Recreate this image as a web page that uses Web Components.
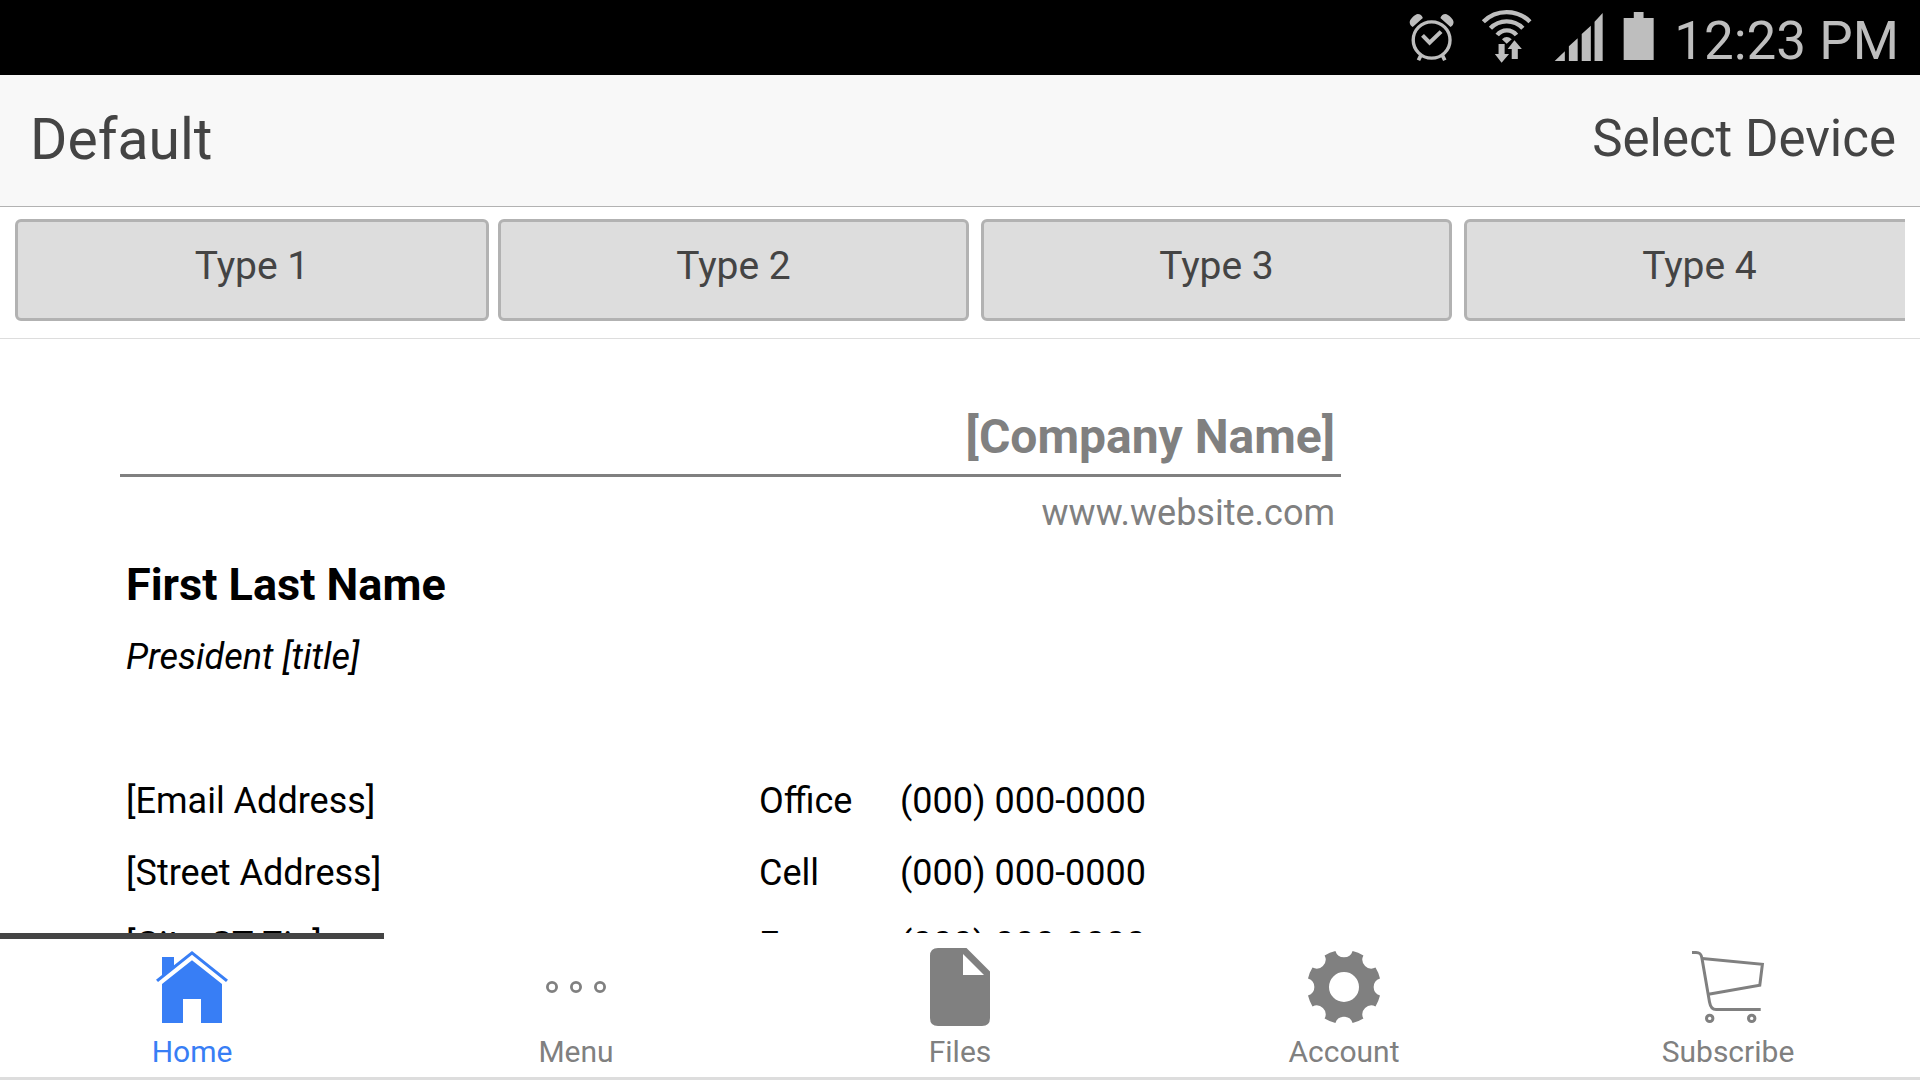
<!DOCTYPE html>
<html lang="en">
<head>
<meta charset="utf-8">
<meta name="viewport" content="width=device-width, initial-scale=1">
<title>Default</title>
<style>
  body {
    margin: 0;
    font-family: Roboto, "Open Sans", sans-serif;
  }
</style>
</head>
<body>
<signature-app></signature-app>

<script>
const makeTemplate = (html) => {
  const template = document.createElement('template');
  template.innerHTML = html;
  return template;
};

const statusTemplate = makeTemplate(`
  <style>
    :host {
      display: flex;
      justify-content: flex-end;
      align-items: center;
      gap: 20px;
      height: 75px;
      padding-right: 21px;
      background: #000;
      color: #bebebe;
      flex: none;
    }

    svg {
      display: block;
      height: 75px;
      fill: currentColor;
      overflow: visible;
    }

    .line {
      fill: none;
      stroke: currentColor;
    }

    time {
      padding-top: 6px;
      font-size: 53px;
      line-height: 68px;
      white-space: nowrap;
    }
  </style>

  <svg width="52" viewBox="57 0 154 225" preserveAspectRatio="none" aria-hidden="true">
    <circle class="line" cx="124" cy="120" r="54.5" stroke-width="10"/>
    <path class="line" d="M97 106 118 128 152 95" stroke-width="12"/>
    <path class="line" d="M93 164 85 181M155 164 163 181" stroke-width="11"/>
    <path d="M68 81 98 54Q94 42 83 42 77 42 66 53 59 60 59 66 59 76 68 81Z"/>
    <path d="M180 81 150 54Q154 42 165 42 171 42 182 53 189 60 189 66 189 76 180 81Z"/>
  </svg>
  <svg width="52" viewBox="270 0 154 225" preserveAspectRatio="none" aria-hidden="true">
    <path class="line" stroke-width="13" d="M277 65A97 97 0 0 1 415 65M298 85A66 66 0 0 1 394 85M318 105A36 36 0 0 1 375 105"/>
    <path d="M332 118Q346 104 361 118L346 131Z"/>
    <path d="M322 132H340V162H353L331 188 311 162H322ZM369 121 391 147H379V177H361V147H349Z"/>
  </svg>
  <svg width="50" viewBox="483 0 148 225" preserveAspectRatio="none" aria-hidden="true">
    <path d="M488 183 518 154V183ZM530 183V139L556 115V183ZM568 183V102L595 77V183ZM606 183V65L630 39V183Z"/>
  </svg>
  <svg width="31" viewBox="690 0 92 225" preserveAspectRatio="none" aria-hidden="true">
    <path d="M692 54H722V36H751V54H781V180H692Z"/>
  </svg>
  <time datetime="12:23">12:23 PM</time>
`);

class StatusBar extends HTMLElement {
  constructor() {
    super();
    this.attachShadow({ mode: 'open' }).appendChild(statusTemplate.content.cloneNode(true));
  }
}

const headerTemplate = makeTemplate(`
  <style>
    :host {
      display: flex;
      justify-content: space-between;
      align-items: center;
      height: 131px;
      padding: 0 24px 0 30px;
      border-bottom: 1px solid #b2b2b2;
      background: #f8f8f8;
      color: #444;
      flex: none;
    }

    h1 {
      margin: 0;
      padding-bottom: 2px;
      font-size: 57px;
      font-weight: 400;
    }

    button {
      padding: 0 0 4px;
      border: 0;
      background: none;
      color: inherit;
      font: inherit;
      font-size: 51px;
    }
  </style>

  <h1><slot></slot></h1>
  <button type="button"><slot name="action"></slot></button>
`);

class HeaderBar extends HTMLElement {
  constructor() {
    super();
    this.attachShadow({ mode: 'open' }).appendChild(headerTemplate.content.cloneNode(true));
  }
}

const typeTemplate = makeTemplate(`
  <style>
    :host {
      display: block;
      flex: none;
      width: 471px;
      margin-right: 12px;
    }

    :host(:first-child) {
      width: 474px;
      margin-right: 9px;
    }

    button {
      display: block;
      width: 100%;
      height: 102px;
      padding: 0 0 8px;
      border: 3px solid #b2b2b2;
      border-radius: 6px;
      background: #ddd;
      color: #444;
      font: inherit;
      font-size: 39px;
    }
  </style>

  <button type="button"><slot></slot></button>
`);

class TypeButton extends HTMLElement {
  constructor() {
    super();
    this.attachShadow({ mode: 'open' }).appendChild(typeTemplate.content.cloneNode(true));
  }
}

const stripTemplate = makeTemplate(`
  <style>
    :host {
      display: block;
      padding: 12px 15px 17px;
      border-bottom: 1px solid #ddd;
      flex: none;
    }

    div {
      display: flex;
      overflow: hidden;
    }
  </style>

  <div><slot></slot></div>
`);

class TypeStrip extends HTMLElement {
  constructor() {
    super();
    this.attachShadow({ mode: 'open' }).appendChild(stripTemplate.content.cloneNode(true));
  }
}

const cardTemplate = makeTemplate(`
  <style>
    :host {
      display: block;
      flex: 1;
      min-height: 0;
      overflow: hidden;
      padding: 61px 120px 0;
    }

    table {
      width: 100%;
      max-width: 1221px;
      border-collapse: separate;
      border-spacing: 0;
      table-layout: fixed;
      color: #000;
      font-size: 36px;
      line-height: 72px;
    }

    .label {
      width: 141px;
    }

    .phone {
      width: 447px;
    }

    td {
      height: 72px;
      padding: 0 6px;
      box-sizing: border-box;
      white-space: nowrap;
    }

    .company {
      border-bottom: 3px solid #808080;
      color: #808080;
      font-size: 48px;
      font-weight: 700;
      line-height: 74px;
      text-align: right;
    }

    .website {
      color: #808080;
      text-align: right;
    }

    .name {
      font-size: 45px;
      font-weight: 700;
    }

    .title {
      font-style: italic;
    }
  </style>

  <table>
    <colgroup><col><col class="label"><col class="phone"></colgroup>
    <tbody>
      <tr><td class="company" colspan="3">[Company Name]</td></tr>
      <tr><td class="website" colspan="3">www.website.com</td></tr>
      <tr><td class="name" colspan="3">First Last Name</td></tr>
      <tr><td class="title" colspan="3">President [title]</td></tr>
      <tr><td colspan="3"></td></tr>
      <tr><td>[Email Address]</td><td>Office</td><td>(000) 000-0000</td></tr>
      <tr><td>[Street Address]</td><td>Cell</td><td>(000) 000-0000</td></tr>
      <tr><td>[City, ST Zip]</td><td>Fax</td><td>(000) 000-0000</td></tr>
    </tbody>
  </table>
`);

class SignatureCard extends HTMLElement {
  constructor() {
    super();
    this.attachShadow({ mode: 'open' }).appendChild(cardTemplate.content.cloneNode(true));
  }
}

const icons = {
  home: `
    <path d="M42 6 78 34.7 76 37 42 9.7 8 37 6 34.7 12 29.9V12H24V20.3Z"/>
    <path d="M42 15.3 72 39V78H51V54H33V78H12V39Z"/>`,
  menu: `
    <g fill="none" stroke="currentColor" stroke-width="2.8">
      <circle cx="18" cy="42" r="4.6"/>
      <circle cx="42" cy="42" r="4.6"/>
      <circle cx="66" cy="42" r="4.6"/>
    </g>`,
  files: `
    <path fill-rule="evenodd" d="M20 3H48.5L72 26.5V73Q72 81 64 81H20Q12 81 12 73V11Q12 3 20 3ZM45 9V30H66Z"/>`,
  account: `
    <path fill-rule="evenodd" d="M50.6 6A37 37 0 0 1 61.4 10.5 9 9 0 0 0 73.5 22.6 37 37 0 0 1 78 33.4 9 9 0 0 0 78 50.6 37 37 0 0 1 73.5 61.4 9 9 0 0 0 61.4 73.5 37 37 0 0 1 50.6 78 9 9 0 0 0 33.4 78 37 37 0 0 1 22.6 73.5 9 9 0 0 0 10.5 61.4 37 37 0 0 1 6 50.6 9 9 0 0 0 6 33.4 37 37 0 0 1 10.5 22.6 9 9 0 0 0 22.6 10.5 37 37 0 0 1 33.4 6 9 9 0 0 0 50.6 6ZM42 27A15 15 0 1 0 42 57 15 15 0 1 0 42 27Z"/>`,
  subscribe: `
    <g fill="none" stroke="currentColor" stroke-width="3">
      <path d="M6 7.4H10C14 7.4 15.3 9 16 13.4L23.5 57C24.3 61.5 26 64.6 30 64.6H74.7"/>
      <path d="M16.3 13.5 76.4 19.3 73.8 40.3 22.5 49.3"/>
      <circle cx="23.7" cy="73.4" r="3.2"/>
      <circle cx="65.7" cy="73.4" r="3.2"/>
    </g>`,
};

const tabTemplate = makeTemplate(`
  <style>
    :host {
      display: block;
      flex: 1;
      color: #808080;
    }

    :host([active]) {
      color: #387ef5;
    }

    a {
      display: flex;
      flex-direction: column;
      align-items: center;
      padding: 6px 0 2px;
      border-top: 6px solid transparent;
      color: inherit;
      font-size: 30px;
      line-height: 46px;
      text-decoration: none;
    }

    :host([active]) a {
      border-top-color: #444;
    }

    svg {
      display: block;
      fill: currentColor;
    }
  </style>

  <a href="#">
    <svg width="84" height="84" viewBox="0 0 84 84" aria-hidden="true"></svg>
    <span><slot></slot></span>
  </a>
`);

class TabItem extends HTMLElement {
  constructor() {
    super();
    this._shadowRoot = this.attachShadow({ mode: 'open' });
    this._shadowRoot.appendChild(tabTemplate.content.cloneNode(true));
  }

  connectedCallback() {
    const icon = this.getAttribute('icon');

    this._shadowRoot.querySelector('svg').innerHTML = icons[icon] || '';
    this._shadowRoot.querySelector('a').setAttribute('href', `#${icon}`);
  }
}

const appTemplate = makeTemplate(`
  <style>
    :host {
      display: flex;
      flex-direction: column;
      height: 100vh;
      overflow: hidden;
      background: #fff;
    }

    nav {
      display: flex;
      flex: none;
      border-bottom: 3px solid #ddd;
    }
  </style>

  <status-bar></status-bar>
  <header-bar>Default<span slot="action">Select Device</span></header-bar>
  <type-strip>
    <type-button>Type 1</type-button>
    <type-button>Type 2</type-button>
    <type-button>Type 3</type-button>
    <type-button>Type 4</type-button>
  </type-strip>
  <signature-card></signature-card>
  <nav>
    <tab-item icon="home" active>Home</tab-item>
    <tab-item icon="menu">Menu</tab-item>
    <tab-item icon="files">Files</tab-item>
    <tab-item icon="account">Account</tab-item>
    <tab-item icon="subscribe">Subscribe</tab-item>
  </nav>
`);

class SignatureApp extends HTMLElement {
  constructor() {
    super();
    this._shadowRoot = this.attachShadow({ mode: 'open' });
    this._shadowRoot.appendChild(appTemplate.content.cloneNode(true));
  }

  connectedCallback() {
    const $tabs = this._shadowRoot.querySelectorAll('tab-item');

    $tabs.forEach(($tab) => {
      $tab.addEventListener('click', () => {
        $tabs.forEach(($other) => $other.toggleAttribute('active', $other === $tab));
      });
    });
  }
}

customElements.define('status-bar', StatusBar);
customElements.define('header-bar', HeaderBar);
customElements.define('type-button', TypeButton);
customElements.define('type-strip', TypeStrip);
customElements.define('signature-card', SignatureCard);
customElements.define('tab-item', TabItem);
customElements.define('signature-app', SignatureApp);
</script>
</body>
</html>
